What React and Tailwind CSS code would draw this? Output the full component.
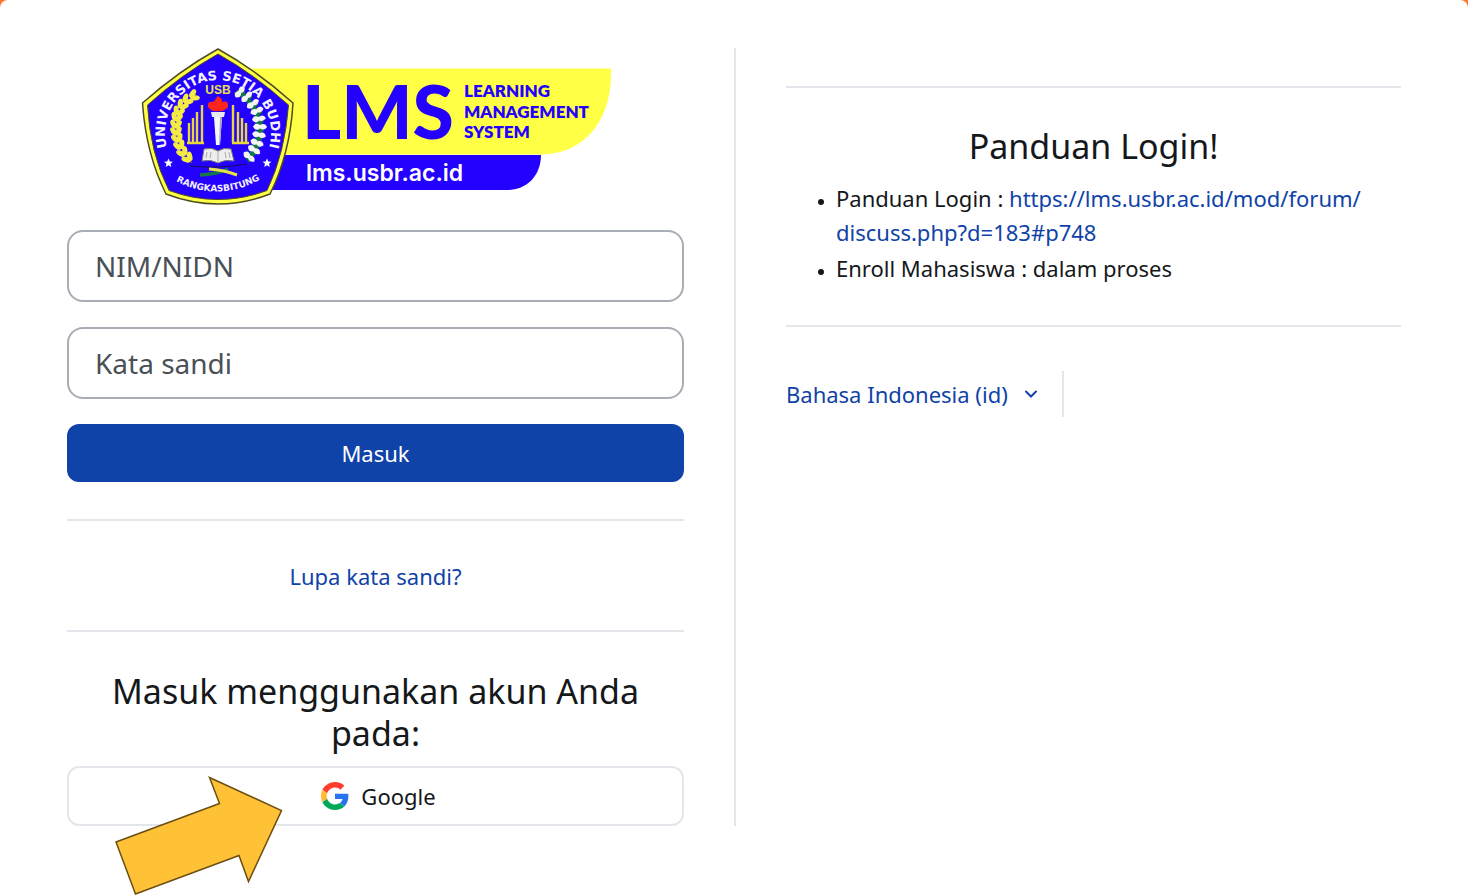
import { useState } from 'react';

const guideUrl = ['https://lms.usbr.ac.id/mod/forum/', 'discuss.php?d=183#p748'];

// One ear of the wheat wreath on the left of the emblem.
const wheat = [
  [195, 95, 62], [188, 99, 48], [183, 104, 36], [179, 110, 24], [177, 116, 14], [176, 123, 4],
  [176, 130, -6], [177, 137, -14], [179, 144, -22], [182, 151, -32], [187, 157, -42]
];

// Cotton wreath on the right.
const cotton = [
  [240, 92, -50], [247, 97, -42], [253, 104, -32], [257, 111, -22], [259, 119, -8], [260, 127, 2],
  [259, 135, 12], [257, 143, 22], [254, 150, 32], [249, 157, 42]
];

const poles = [
  [189, 123], [193, 118], [197, 112], [202, 105], [233, 105], [238, 112], [242, 118], [246, 123]
];

function Star({ x, y }) {
  return (
    <path
      transform={`translate(${x} ${y})`}
      d="M0-4.6 1.3-1.5 4.5-1.3 2 .8 2.8 4 0 2.2-2.8 4-2 .8-4.5-1.3-1.3-1.5Z"
      fill="#fff"
    />
  );
}

function Logo() {
  return (
    <svg viewBox="141 48 470 157" className="h-[157px] w-[470px] max-w-full" role="img" aria-label="LMS USBR">
      <path d="M230 68.500H611V74C611 122 583 154.500 540 154.500H230Z" fill="#ffff45" />
      <path d="M230 155H541C541 176 526 190 508 190H230Z" fill="#2400ff" />

      <text x="302" y="139" fontFamily="Lato, sans-serif" fontSize="75" fontWeight="900" fill="#2400ff">LMS</text>
      <g fontFamily="Lato, sans-serif" fontWeight="800" fontSize="17" fill="#2400ff">
        <text x="464" y="97">LEARNING</text>
        <text x="464" y="118">MANAGEMENT</text>
        <text x="464" y="138">SYSTEM</text>
      </g>
      <text x="306" y="181" fontFamily="Inter, sans-serif" fontWeight="600" fontSize="23" fill="#fff">
        lms.usbr.ac.id
      </text>

      {/* shield */}
      <path
        d="M218 49Q256 70 293 103Q290 154 270 194Q244 204 218 204Q192 204 166 194Q146 154 142.500 103Q180 70 218 49Z"
        fill="#ffff45"
        stroke="#4b4b24"
        strokeWidth="1.500"
        strokeLinejoin="round"
      />
      <path
        d="M218 54Q254 74 288.500 105Q285 153 267 190.500Q243 199.500 218 199.500Q193 199.500 169 190.500Q150 153 147.500 105Q182 74 218 54Z"
        fill="#2400ff"
        stroke="#4b4b24"
        strokeWidth="1"
        strokeLinejoin="round"
      />

      <defs>
        <path id="arc-top" d="M168.500 152A53 53 0 1 1 267.500 152" />
        <path id="arc-bottom" d="M170 178Q218 206 266 176" />
      </defs>
      <g fontFamily="DejaVu Sans, sans-serif" fontWeight="700" fill="#f2f2ff">
        <text fontSize="13" textAnchor="middle">
          <textPath href="#arc-top" startOffset="50%">UNIVERSITAS SETIA BUDHI</textPath>
        </text>
        <text fontSize="9" textAnchor="middle">
          <textPath href="#arc-bottom" startOffset="50%">RANGKASBITUNG</textPath>
        </text>
      </g>
      <text
        x="218"
        y="94"
        textAnchor="middle"
        fontFamily="Liberation Sans, Arial, sans-serif"
        fontWeight="700"
        fontSize="12"
        fill="#e8e04a"
      >
        USB
      </text>

      {/* wreaths */}
      <path d="M196 94Q158 125 192 163" fill="none" stroke="#8a8630" strokeWidth="1" />
      {wheat.map(([x, y, angle]) => (
        <g key={y} transform={`translate(${x} ${y}) rotate(${angle})`} fill="#f4ec45">
          <ellipse cx="-2.800" cy="0" rx="2.600" ry="4.800" transform="rotate(-28)" />
          <ellipse cx="2.800" cy="0" rx="2.600" ry="4.800" transform="rotate(28)" />
        </g>
      ))}
      <path d="M240 92Q276 124 248 160" fill="none" stroke="#14784a" strokeWidth="5" />
      {cotton.map(([x, y, angle]) => (
        <g key={y} transform={`translate(${x} ${y}) rotate(${angle})`}>
          <path d="M-5-4 4-2 4 4-4 3Z" fill="#14784a" />
          <path d="M-7 0Q-5-5 0-2Q5-5 7 0Q4 4 0 1.500Q-4 5-7 0Z" fill="#f4f4f4" />
        </g>
      ))}
      <path d="M190 166Q218 169 246 164" fill="none" stroke="#15104e" strokeWidth="1" />
      <path d="M200 175Q218 174 228 169" fill="none" stroke="#14784a" strokeWidth="3.500" />
      <path d="M209 169Q224 170 237 175" fill="none" stroke="#e8e04a" strokeWidth="3" />

      {/* flag poles */}
      <g stroke="#e8d83c" strokeWidth="2.400">
        {poles.map(([x, top]) => (
          <path key={x} d={`M${x} ${top}V143`} />
        ))}
        <path d="M187 143H204M232 143H249" />
      </g>

      {/* torch */}
      <path d="M208 107Q207 101 213 102Q217 99 217 96Q223 98 222 102Q229 100 228 107Q224 112 218 111Q211 112 208 107Z" fill="#ff241c" />
      <path d="M211 112H225L224 117H212Z" fill="#e9e9ee" />
      <path d="M214 117H222L220 145H216Z" fill="#f7f7f7" />
      <path d="M220 117H222L220 145H219Z" fill="#aaaab8" />

      {/* book */}
      <path d="M204 149Q212 147 218 151Q224 147 231 149L234 161Q225 159 218 163Q211 159 202 161Z" fill="#eeeeee" stroke="#777" strokeWidth="1" />
      <path d="M218 151V163M207 152 206 158M211 152 210 158M225 152 226 158M229 152 230 158" stroke="#aaa" strokeWidth="1" />

      <Star x={168.500} y={163} />
      <Star x={267} y={163} />
    </svg>
  );
}

function GoogleIcon() {
  return (
    <svg viewBox="0 0 48 48" className="size-7" aria-hidden="true">
      <path fill="#FF3D2E" d="M24 9.500c3.540 0 6.710 1.220 9.210 3.600l6.850-6.850C35.900 2.380 30.470 0 24 0 14.620 0 6.510 5.380 2.560 13.220l7.980 6.190C12.430 13.720 17.740 9.500 24 9.500z" />
      <path fill="#2874F0" d="M46.980 24.550c0-1.570-.15-3.090-.38-4.550H24v9.020h12.940c-.58 2.960-2.260 5.480-4.780 7.180l7.730 6c4.510-4.180 7.090-10.360 7.090-17.650z" />
      <path fill="#FFBA37" d="M10.530 28.590c-.48-1.450-.76-2.990-.76-4.590s.27-3.140.76-4.590l-7.980-6.190C.92 16.460 0 20.120 0 24c0 3.880.92 7.540 2.560 10.780l7.970-6.190z" />
      <path fill="#00A85A" d="M24 48c6.480 0 11.930-2.130 15.890-5.810l-7.730-6c-2.150 1.450-4.920 2.300-8.160 2.300-6.260 0-11.570-4.220-13.470-9.910l-7.980 6.190C6.510 42.620 14.620 48 24 48z" />
    </svg>
  );
}

function Field({ label, ...props }) {
  return (
    <input
      aria-label={label}
      placeholder={label}
      className="block h-[72px] w-full rounded-2xl border-2 border-[#a9adb5] bg-white px-[26px] text-[28px] text-[#495057] outline-none placeholder:text-[#495057]"
      {...props}
    />
  );
}

export default function App() {
  const [username, setUsername] = useState('');
  const [password, setPassword] = useState('');

  return (
    <div className="min-h-screen bg-[#ff7430]">
      <main className="grid min-h-screen grid-cols-2 content-start rounded-t-lg bg-white px-[67px] pt-12 font-['Noto_Sans',sans-serif] text-[22px] leading-[34px] text-[#15181b]">
        <section className="pr-[50px]">
          <div className="flex justify-center">
            <Logo />
          </div>

          <form className="mt-[25px] flex flex-col gap-[25px]" onSubmit={(event) => event.preventDefault()}>
            <Field
              label="NIM/NIDN"
              type="text"
              value={username}
              onChange={(event) => setUsername(event.target.value)}
            />
            <Field
              label="Kata sandi"
              type="password"
              value={password}
              onChange={(event) => setPassword(event.target.value)}
            />
            <button type="submit" className="h-[58px] rounded-xl bg-[#0f43a8] text-white">
              Masuk
            </button>
          </form>

          <hr className="mt-[37px] mb-[38px] border-t-2 border-[#e3e6ea]" />
          <div className="text-center">
            <a href="#lupa" className="text-[#0f43a8]">Lupa kata sandi?</a>
          </div>
          <hr className="mt-[37px] mb-[38px] border-t-2 border-[#e3e6ea]" />

          <h2 className="text-center text-[34px] leading-[42px]">Masuk menggunakan akun Anda pada:</h2>
          <div className="relative mt-3">
            <button
              type="button"
              className="flex h-[60px] w-full items-center justify-center gap-3 rounded-xl border-2 border-[#e3e6ea] pl-1.5"
            >
              <GoogleIcon />
              Google
            </button>
            {/* pointer to the Google button */}
            <svg viewBox="115 776 168 120" className="absolute top-2.5 left-12 h-[120px] w-[168px]" aria-hidden="true">
              <path
                d="M209.500 777.500 281.500 810.500 248.500 881.500 239 855.500 135.500 894 116 842 219.500 803.500Z"
                fill="#ffc136"
                stroke="#6b4e12"
                strokeWidth="1.500"
              />
            </svg>
          </div>
        </section>

        <section className="border-l-2 border-[#e3e6ea] pl-[50px]">
          <hr className="mt-[38px] mb-[37px] border-t-2 border-[#e3e6ea]" />
          <h2 className="text-center text-[34px] leading-[42px]">Panduan Login!</h2>
          <ul className="mt-3.5 list-disc space-y-0.5 pl-[50px] marker:text-base">
            <li>
              Panduan Login :{' '}
              <a href={guideUrl.join('')} className="text-[#0f43a8]">
                {guideUrl[0]}
                <wbr />
                {guideUrl[1]}
              </a>
            </li>
            <li>Enroll Mahasiswa : dalam proses</li>
          </ul>
          <hr className="mt-10 mb-11 border-t-2 border-[#e3e6ea]" />

          <div className="inline-flex h-[46px] items-center border-r-2 border-[#e3e6ea] pr-6">
            <div className="relative text-[#0f43a8]">
              <select aria-label="Bahasa" className="appearance-none bg-transparent pr-[30px] outline-none">
                <option>Bahasa Indonesia (id)</option>
              </select>
              <svg viewBox="0 0 14 8" className="pointer-events-none absolute top-1/2 right-0 h-2 w-3.5 -translate-y-1/2" aria-hidden="true">
                <path d="M2 1.500 7 6.500 12 1.500" fill="none" stroke="currentColor" strokeWidth="2" strokeLinecap="round" />
              </svg>
            </div>
          </div>
        </section>
      </main>
    </div>
  );
}
